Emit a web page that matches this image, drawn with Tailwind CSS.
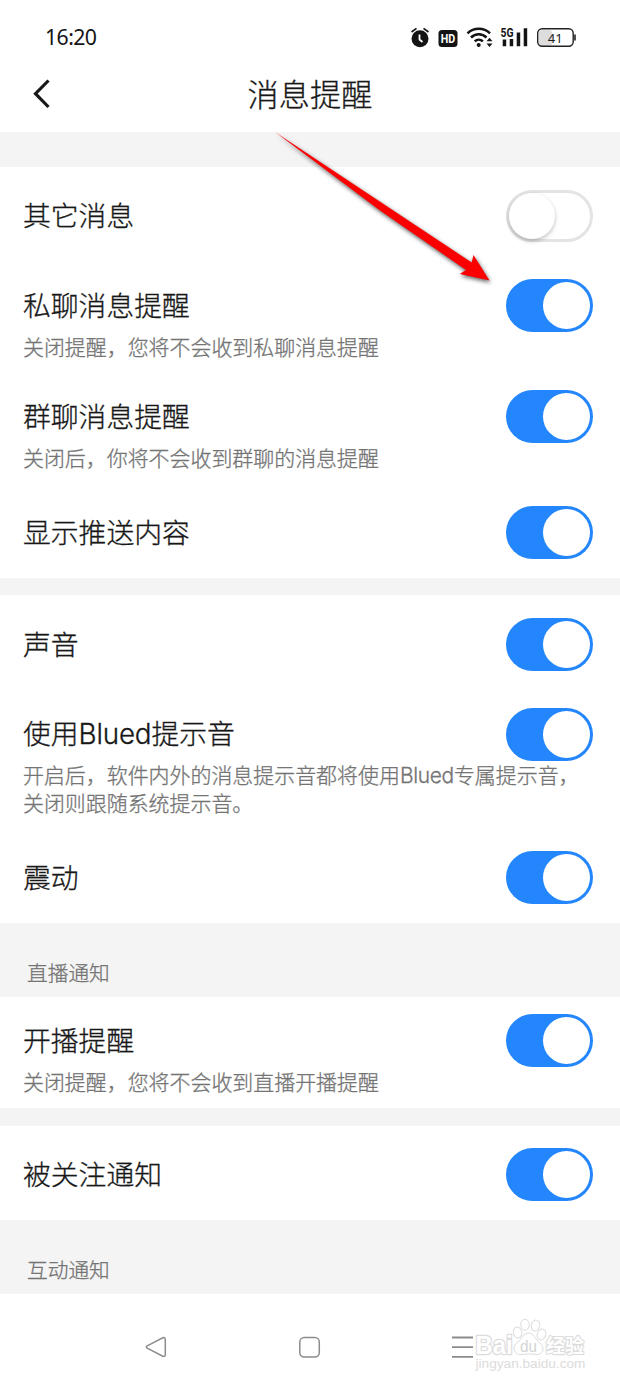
<!DOCTYPE html>
<html lang="zh-CN">
<head>
<meta charset="utf-8">
<title>消息提醒</title>
<script src="https://cdn.jsdelivr.net/npm/@tailwindcss/browser@4"></script>
</head>
<body class="relative flex h-[1386px] w-[620px] flex-col overflow-hidden bg-white font-['Inter','Noto_Sans_CJK_SC',sans-serif] font-light text-[#181818] [-webkit-text-stroke-width:0.3px]">
<header class="h-[132px] shrink-0">
  <div class="flex h-[60px] items-center justify-between pt-[14px] pr-[43px] pl-[45px] [-webkit-text-stroke-width:0px]">
    <time class="font-['Noto_Sans','Noto_Sans_CJK_SC',sans-serif] text-[21.3px] leading-none font-normal tracking-[-0.6px] text-[#141414]">16:20</time>
    <svg class="h-[30px] w-[168px]" viewBox="409 22 168 30" fill="none">
      <g stroke="#141414">
        <circle cx="420" cy="38.700" r="8.500" fill="#141414" stroke="none"/>
        <path d="M411.500 32l5-3.600M428.500 32l-5-3.600" stroke-width="1.700"/>
        <path d="M419.500 34.500v5l3 2.500" stroke="#fff" stroke-width="1.800"/>
      </g>
      <rect x="438.500" y="30" width="19" height="17" rx="3.500" fill="#141414"/>
      <text x="448" y="43" text-anchor="middle" font-family="Roboto" font-size="13" font-weight="700" fill="#fff" textLength="14.500" lengthAdjust="spacingAndGlyphs">HD</text>
      <g stroke="#141414" stroke-width="2.500">
        <path d="M467.500 33.300a16.200 16.200 0 0 1 22.500 0M471 37.500a11 11 0 0 1 15.500 0M474.700 41.400a6 6 0 0 1 8.200 0"/>
      </g>
      <circle cx="478.700" cy="45" r="2" fill="#141414"/>
      <path d="M486.500 41.300l3-3.500 3 3.500zM486.500 43.500l3 3.500 3-3.500z" fill="#141414"/>
      <text x="500.500" y="36.500" font-family="Roboto" font-size="12" font-weight="700" fill="#141414" textLength="13" lengthAdjust="spacingAndGlyphs">5G</text>
      <path d="M502.700 39.500h3.500v6.700h-3.500zM509.700 39h3.500v7.200h-3.500zM516.700 32.500h3.500v13.700h-3.500zM523.700 28.300h3.500v17.900h-3.500z" fill="#141414"/>
      <rect x="539" y="30" width="13" height="16" rx="3" fill="#ddd"/>
      <rect x="537.700" y="28.700" width="35.500" height="17.600" rx="4.500" stroke="#222" stroke-width="1.400"/>
      <path d="M575 34.500v6" stroke="#222" stroke-width="1.600"/>
      <text x="555.300" y="42.500" text-anchor="middle" font-family="Noto Sans" font-size="13" font-weight="400" fill="#222">41</text>
    </svg>
  </div>
  <div class="grid h-[70px] grid-cols-[1fr_auto_1fr] items-center">
    <svg class="ml-[32px] h-[34px] w-[20px]" viewBox="0 0 20 34" fill="none" stroke="#181818" stroke-width="3.2"><path d="M16.500 2.500L3.500 15.700L16.500 29"/></svg>
    <h1 class="pt-[2px] text-[31.2px] leading-none font-light">消息提醒</h1>
  </div>
</header>

<main class="flex h-[1162px] shrink-0 flex-col bg-[#f4f4f4] pt-[35px]">
  <section class="h-[411px] bg-white pt-[23px] pr-[27px] pl-[23px]">
    <div class="h-[89px]">
      <div class="flex h-[52px] items-center justify-between"><h2 class="pt-[2px] text-[27.8px] leading-none">其它消息</h2>
        <span class="h-[52px] w-[87px] rounded-full border-[3px] border-[#e4e4e4]"><i class="block size-[46px] rounded-full bg-white shadow-[0_2px_4px_rgba(0,0,0,0.25)]"></i></span></div>
    </div>
    <div class="h-[111px]">
      <div class="flex h-[53px] items-center justify-between"><h2 class="pt-[2px] text-[27.8px] leading-none">私聊消息提醒</h2>
        <span class="flex h-[53px] w-[87px] items-center justify-end rounded-full bg-[#2386fc] pr-[3px]"><i class="size-[47px] rounded-full bg-white"></i></span></div>
      <p class="pt-[2px] text-[20.95px] leading-[27px] text-[#747474]">关闭提醒，您将不会收到私聊消息提醒</p>
    </div>
    <div class="h-[116px]">
      <div class="flex h-[53px] items-center justify-between"><h2 class="pt-[2px] text-[27.8px] leading-none">群聊消息提醒</h2>
        <span class="flex h-[53px] w-[87px] items-center justify-end rounded-full bg-[#2386fc] pr-[3px]"><i class="size-[47px] rounded-full bg-white"></i></span></div>
      <p class="pt-[2px] text-[20.95px] leading-[27px] text-[#747474]">关闭后，你将不会收到群聊的消息提醒</p>
    </div>
    <div class="flex h-[53px] items-center justify-between"><h2 class="pt-[2px] text-[27.8px] leading-none">显示推送内容</h2>
      <span class="flex h-[53px] w-[87px] items-center justify-end rounded-full bg-[#2386fc] pr-[3px]"><i class="size-[47px] rounded-full bg-white"></i></span></div>
  </section>

  <section class="mt-[17px] h-[328px] bg-white pt-[23px] pr-[27px] pl-[23px]">
    <div class="h-[90px]">
      <div class="flex h-[53px] items-center justify-between"><h2 class="pt-[2px] text-[27.8px] leading-none">声音</h2>
        <span class="flex h-[53px] w-[87px] items-center justify-end rounded-full bg-[#2386fc] pr-[3px]"><i class="size-[47px] rounded-full bg-white"></i></span></div>
    </div>
    <div class="h-[143px]">
      <div class="flex h-[53px] items-center justify-between"><h2 class="text-[27.8px] leading-none">使用<span class="tracking-[-0.2px]">Blued</span>提示音</h2>
        <span class="flex h-[53px] w-[87px] items-center justify-end rounded-full bg-[#2386fc] pr-[3px]"><i class="size-[47px] rounded-full bg-white"></i></span></div>
      <p class="pt-px text-[20.95px] leading-[27.5px] whitespace-nowrap text-[#747474]">开启后，软件内外的消息提示音都将使用<span class="tracking-[-0.3px]">Blued</span>专属提示音，<br>关闭则跟随系统提示音。</p>
    </div>
    <div class="flex h-[53px] items-center justify-between"><h2 class="pt-[2px] text-[27.8px] leading-none">震动</h2>
      <span class="flex h-[53px] w-[87px] items-center justify-end rounded-full bg-[#2386fc] pr-[3px]"><i class="size-[47px] rounded-full bg-white"></i></span></div>
  </section>

  <h3 class="flex h-[74px] items-center pt-[29px] pl-[27px] text-[20.7px] leading-none text-[#747474]">直播通知</h3>
  <section class="h-[111px] bg-white pt-[17px] pr-[27px] pl-[23px]">
    <div class="flex h-[53px] items-center justify-between"><h2 class="pt-[2px] text-[27.8px] leading-none">开播提醒</h2>
      <span class="flex h-[53px] w-[87px] items-center justify-end rounded-full bg-[#2386fc] pr-[3px]"><i class="size-[47px] rounded-full bg-white"></i></span></div>
    <p class="pt-[2px] text-[20.95px] leading-[27px] text-[#747474]">关闭提醒，您将不会收到直播开播提醒</p>
  </section>

  <section class="mt-[18px] h-[94px] bg-white pt-[22px] pr-[27px] pl-[23px]">
    <div class="flex h-[53px] items-center justify-between"><h2 class="pt-[2px] text-[27.8px] leading-none">被关注通知</h2>
      <span class="flex h-[53px] w-[87px] items-center justify-end rounded-full bg-[#2386fc] pr-[3px]"><i class="size-[47px] rounded-full bg-white"></i></span></div>
  </section>
  <h3 class="flex h-[74px] items-center pt-[29px] pl-[27px] text-[20.7px] leading-none text-[#747474]">互动通知</h3>
</main>

<nav class="h-[92px] [-webkit-text-stroke-width:0px]">
  <svg class="h-[92px] w-[620px]" viewBox="0 1294 620 92" fill="none">
    <g stroke="#8c8c8c" stroke-width="1.500">
      <path d="M147.200 1345.800L162.800 1337.800Q165.300 1337 165.300 1339.500V1354.500Q165.300 1357 162.800 1356.200L147.200 1348.200Q145.500 1347 147.200 1345.800Z"/>
      <rect x="299.800" y="1337.500" width="19.500" height="19.500" rx="4.500"/>
      <path d="M452 1337.500h21M452 1347.200h21M452 1356.800h21" stroke-width="1.800"/>
    </g>
    <g stroke="#dcdcdc" stroke-width="1" fill="#fff">
      <text x="475.500" y="1354" font-family="Liberation Sans" font-weight="700" font-size="25" stroke-width="2.500" stroke-linejoin="round" paint-order="stroke" textLength="37" lengthAdjust="spacingAndGlyphs">Bai</text>
      <ellipse cx="517.500" cy="1332.500" rx="4.200" ry="5.500" transform="rotate(-15 517.500 1332.500)"/>
      <ellipse cx="525" cy="1324.800" rx="4.300" ry="5.500"/>
      <ellipse cx="535.500" cy="1325.500" rx="4.200" ry="5.500" transform="rotate(12 535.500 1325.500)"/>
      <ellipse cx="541.500" cy="1334.500" rx="4.300" ry="5.500" transform="rotate(20 541.500 1334.500)"/>
      <path d="M528.500 1333C523 1333 522 1339 518 1342C511 1347 514 1355 521 1354.500C526 1354 531 1353.500 536 1354.500C544 1355 545 1347 540 1343C535 1339 534 1333 528.500 1333Z"/>
      <text x="520" y="1351.500" font-family="Liberation Sans" font-weight="400" font-size="16" stroke="none" fill="#d4d4d4" textLength="17" lengthAdjust="spacingAndGlyphs">du</text>
      <text x="546" y="1352.500" font-family="Noto Sans CJK SC" font-weight="700" font-size="19" stroke-width="2.200" stroke-linejoin="round" paint-order="stroke">经验</text>
    </g>
    <text x="475.500" y="1367.500" font-family="Liberation Sans" font-weight="400" font-size="12.500" fill="#dcdcdc" textLength="110" lengthAdjust="spacingAndGlyphs">jingyan.baidu.com</text>
  </svg>
</nav>

<svg class="absolute top-[120px] left-[260px] h-[190px] w-[250px] drop-shadow-[1px_2px_2px_rgba(0,0,0,0.65)]" viewBox="260 120 250 190">
  <path d="M275 132L471.700 262.500L473.500 255L489.500 280.500L459.800 274L466 270L380 210.500Z" fill="#fb0000"/>
</svg>
</body>
</html>
